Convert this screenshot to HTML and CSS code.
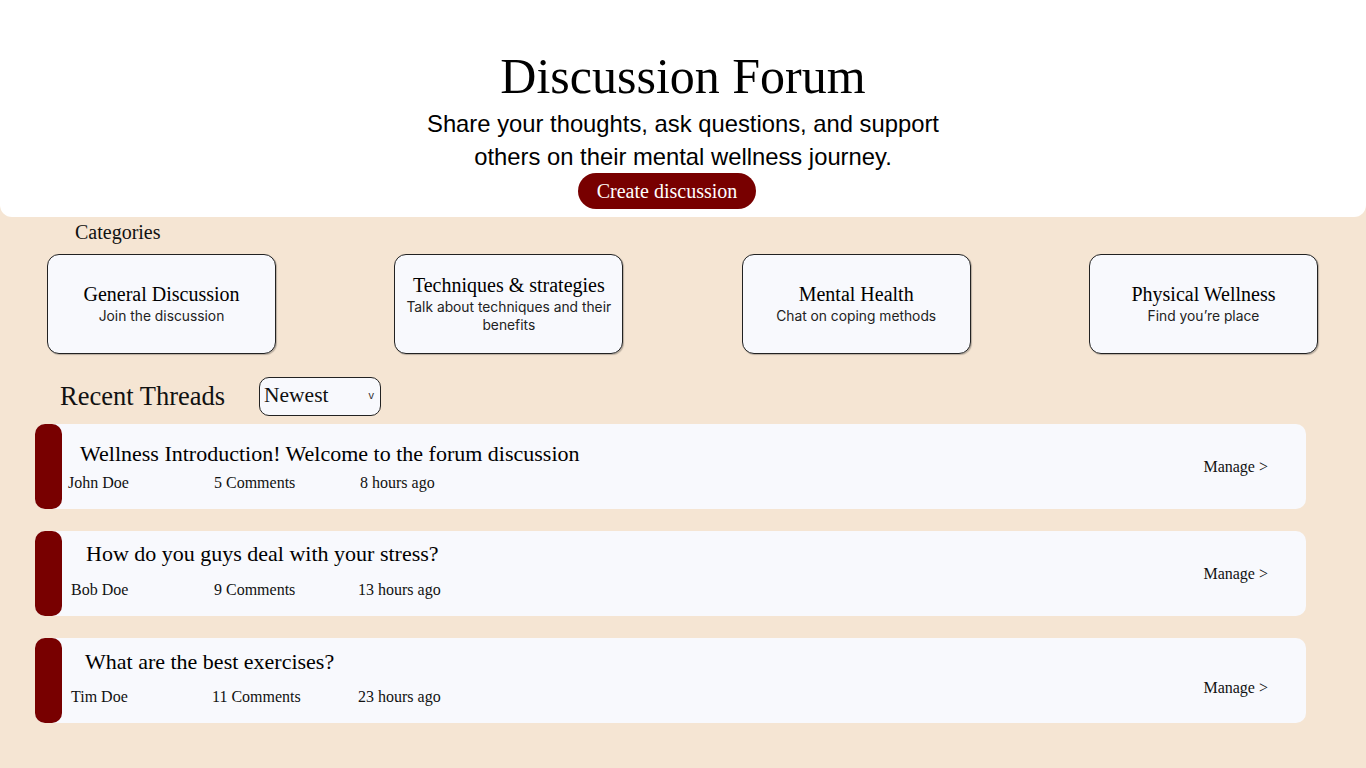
FILE: index.html
```html
<!DOCTYPE html>
<html lang="en">
<head>
<meta charset="utf-8">
<title>Discussion Forum</title>
<link rel="stylesheet" href="styles.css">
</head>
<body>
<header class="hero">
  <h1 class="hero-title">Discussion Forum</h1>
  <p class="hero-sub">Share your thoughts, ask questions, and support others on their mental wellness journey.</p>
  <button class="btn-create">Create discussion</button>
</header>

<main class="main">
  <h2 class="cat-label">Categories</h2>
  <div class="cat-row">
    <div class="cat-card">
      <div class="cat-title">General Discussion</div>
      <div class="cat-desc">Join the discussion</div>
    </div>
    <div class="cat-card">
      <div class="cat-title">Techniques &amp; strategies</div>
      <div class="cat-desc">Talk about techniques and their benefits</div>
    </div>
    <div class="cat-card">
      <div class="cat-title">Mental Health</div>
      <div class="cat-desc">Chat on coping methods</div>
    </div>
    <div class="cat-card">
      <div class="cat-title">Physical Wellness</div>
      <div class="cat-desc">Find you’re place</div>
    </div>
  </div>

  <div class="threads-head">
    <h2 class="threads-title">Recent Threads</h2>
    <div class="sort-select"><span>Newest</span><span class="sort-caret">v</span></div>
  </div>

  <div class="thread-list">
    <div class="thread thread-a">
      <div class="thread-bar"></div>
      <div class="thread-body">
        <div class="thread-title">Wellness Introduction! Welcome to the forum discussion</div>
        <div class="thread-meta">
          <span class="meta-col">John Doe</span>
          <span class="meta-col">5 Comments</span>
          <span class="meta-col">8 hours ago</span>
        </div>
      </div>
      <div class="thread-manage">Manage &gt;</div>
    </div>
    <div class="thread thread-b">
      <div class="thread-bar"></div>
      <div class="thread-body">
        <div class="thread-title">How do you guys deal with your stress?</div>
        <div class="thread-meta">
          <span class="meta-col">Bob Doe</span>
          <span class="meta-col">9 Comments</span>
          <span class="meta-col">13 hours ago</span>
        </div>
      </div>
      <div class="thread-manage">Manage &gt;</div>
    </div>
    <div class="thread thread-c">
      <div class="thread-bar"></div>
      <div class="thread-body">
        <div class="thread-title">What are the best exercises?</div>
        <div class="thread-meta">
          <span class="meta-col">Tim Doe</span>
          <span class="meta-col">11 Comments</span>
          <span class="meta-col">23 hours ago</span>
        </div>
      </div>
      <div class="thread-manage">Manage &gt;</div>
    </div>
  </div>
</main>
</body>
</html>
```

FILE: styles.css
```css
* { box-sizing: border-box; }

html, body {
  margin: 0;
  padding: 0;
}

body {
  background: #f5e5d3;
  color: #111;
  font-family: "Liberation Serif", serif;
  width: 1366px;
  height: 768px;
  overflow: hidden;
}

.hero {
  background: #ffffff;
  height: 217px;
  border-radius: 0 0 12px 12px;
  display: flex;
  flex-direction: column;
  align-items: center;
  padding-top: 48px;
}

.hero-title {
  margin: 0;
  font-family: "Liberation Serif", serif;
  font-weight: 400;
  font-size: 50px;
  line-height: 56px;
  color: #000;
}

.hero-sub {
  margin: 3px 0 0;
  width: 530px;
  text-align: center;
  font-family: "Liberation Sans", Arial, sans-serif;
  font-size: 23.8px;
  line-height: 33px;
  color: #000;
}

.btn-create {
  margin: 0 32px 0 0;
  width: 178px;
  height: 36px;
  border: none;
  border-radius: 18px;
  background: #780000;
  color: #fff;
  font-family: "Liberation Serif", serif;
  font-size: 20px;
  padding: 0;
}

.main {
  padding: 0;
}

.cat-label {
  margin: 0;
  padding: 4px 0 0 75px;
  height: 37px;
  font-weight: 400;
  font-size: 20px;
  line-height: 22px;
}

.cat-row {
  display: flex;
  justify-content: space-between;
  padding: 0 48px 0 47px;
}

.cat-card {
  width: 229px;
  height: 100px;
  background: #f8f9fd;
  border: 1px solid #222;
  border-radius: 12px;
  box-shadow: 1px 1px 1px rgba(0,0,0,0.25);
  display: flex;
  flex-direction: column;
  align-items: center;
  justify-content: center;
  text-align: center;
  padding: 0 6px 0;
}

.cat-title {
  font-size: 20px;
  line-height: 23px;
  color: #000;
}

.cat-desc {
  font-family: "Inter", "Open Sans", sans-serif;
  font-size: 13.8px;
  line-height: 18px;
  color: #222;
  margin-top: 1px;
}

.threads-head {
  display: flex;
  align-items: center;
  padding: 14px 0 0 60px;
  height: 70px;
}

.threads-title {
  margin: 0;
  font-weight: 400;
  font-size: 26.5px;
  line-height: 30px;
  width: 199px;
}

.sort-select {
  width: 122px;
  height: 39px;
  border: 1px solid #222;
  border-radius: 10px;
  background: #f8f9fd;
  display: flex;
  align-items: center;
  justify-content: space-between;
  padding: 0 6px 2px 4px;
  font-size: 21.5px;
}

.sort-caret {
  font-family: "Liberation Sans", sans-serif;
  font-size: 11px;
  color: #333;
}

.thread-list {
  display: flex;
  flex-direction: column;
  gap: 22px;
  padding: 0 60px 0 35px;
}

.thread {
  display: flex;
  height: 85px;
  background: #f8f9fd;
  border-radius: 10px;
}

.thread-bar {
  width: 27px;
  background: #780000;
  border-radius: 10px;
  flex: none;
}

.thread-body {
  flex: 1;
  display: flex;
  flex-direction: column;
}

.thread-title {
  font-size: 22px;
  line-height: 26px;
  color: #000;
  padding-left: 18px;
}

.thread-meta {
  display: flex;
  font-size: 16px;
  line-height: 18px;
  padding-left: 6px;
}

.meta-col {
  width: 146px;
}

.thread-manage {
  align-self: center;
  font-size: 16px;
  margin-right: 38px;
}

.thread-a .thread-body { padding-top: 17px; }
.thread-a .thread-meta { margin-top: 7px; }

.thread-b .thread-body { padding-top: 10px; }
.thread-b .thread-title { padding-left: 24px; }
.thread-b .thread-meta { padding-left: 9px; margin-top: 14px; }
.thread-b .meta-col:nth-child(2) { margin-left: -3px; margin-right: 3px; }
.thread-b .meta-col:nth-child(3) { margin-left: -5px; }

.thread-c .thread-body { padding-top: 11px; }
.thread-c .thread-title { padding-left: 23px; }
.thread-c .thread-meta { padding-left: 9px; margin-top: 13px; }
.thread-c .meta-col:nth-child(2) { margin-left: -5px; margin-right: 5px; }
.thread-c .meta-col:nth-child(3) { margin-left: -5px; }
.thread-c .thread-manage { margin-top: 14px; }
```
